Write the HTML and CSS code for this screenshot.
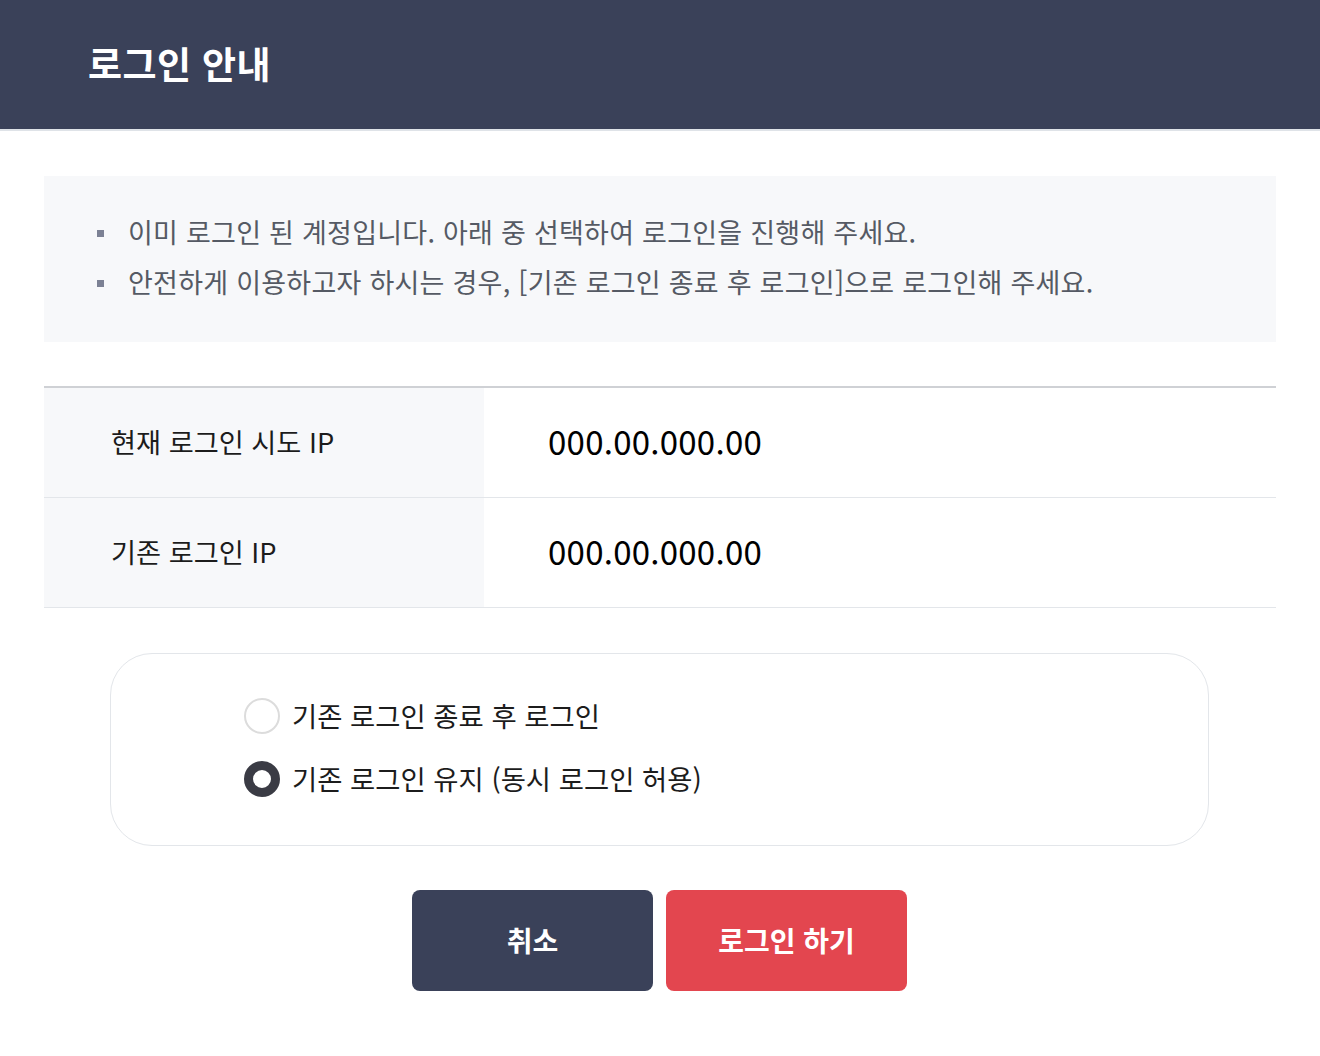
FILE: index.html
```html
<!DOCTYPE html>
<html lang="ko">
<head>
<meta charset="utf-8">
<title>로그인 안내</title>
<link rel="stylesheet" href="styles.css">
</head>
<body>
<header class="header">
  <h1 class="title">로그인 안내</h1>
</header>
<main class="content">
  <ul class="notice">
    <li>이미 로그인 된 계정입니다. 아래 중 선택하여 로그인을 진행해 주세요.</li>
    <li>안전하게 이용하고자 하시는 경우, [기존 로그인 종료 후 로그인]으로 로그인해 주세요.</li>
  </ul>
  <div class="info">
    <div class="row">
      <div class="label">현재 로그인 시도 IP</div>
      <div class="value">000.00.000.00</div>
    </div>
    <div class="row">
      <div class="label">기존 로그인 IP</div>
      <div class="value">000.00.000.00</div>
    </div>
  </div>
  <div class="options">
    <label class="option">
      <span class="radio"></span>
      <span class="option-text">기존 로그인 종료 후 로그인</span>
    </label>
    <label class="option">
      <span class="radio checked"></span>
      <span class="option-text">기존 로그인 유지 (동시 로그인 허용)</span>
    </label>
  </div>
  <div class="actions">
    <button class="btn btn-cancel">취소</button>
    <button class="btn btn-login">로그인 하기</button>
  </div>
</main>
</body>
</html>
```
FILE: styles.css
```css
* { box-sizing: border-box; }
html, body { margin: 0; padding: 0; background: #fff; }
body {
  font-family: "Noto Sans CJK KR", "Noto Sans", sans-serif;
  color: #222;
}
.header {
  height: 131px;
  background: #3a4159;
  border-bottom: 2px solid #dfe3e8;
  display: flex;
  align-items: center;
  padding-left: 88px;
}
.title {
  margin: 0;
  color: #fff;
  font-size: 37px;
  font-weight: 700;
  letter-spacing: 0.4px;
  padding-bottom: 4px;
}
.content {
  padding: 45px 44px 0;
}
.notice {
  list-style: none;
  margin: 0;
  background: #f7f8fa;
  padding: 31px 0 0 0;
  height: 166px;
}
.notice li {
  position: relative;
  padding-left: 84px;
  font-size: 27px;
  line-height: 50px;
  color: #555a64;
  letter-spacing: 0.25px;
}
.notice li::before {
  content: "";
  position: absolute;
  left: 53px;
  top: 23px;
  width: 7px;
  height: 7px;
  background: #7c8194;
}
.info {
  margin-top: 44px;
  border-top: 2px solid #cfd1d5;
}
.row {
  display: flex;
  height: 110px;
  border-bottom: 1px solid #e3e6ea;
}
.label {
  width: 440px;
  background: #f7f8fa;
  padding: 0 0 4px 67px;
  display: flex;
  align-items: center;
  font-size: 27.2px;
  color: #1c1c1c;
  letter-spacing: 0;
}
.value {
  padding: 0 0 4px 64px;
  display: flex;
  align-items: center;
  font-size: 33px;
  color: #000;
  letter-spacing: 0.25px;
}
.options {
  margin: 45px 67px 0 66px;
  height: 193px;
  border: 1px solid #e3e6ea;
  border-radius: 42px;
  display: flex;
  flex-direction: column;
  justify-content: center;
  gap: 27px;
  padding: 0 0 4px 133px;
}
.option {
  display: flex;
  align-items: center;
  gap: 12px;
  height: 36px;
}
.radio {
  width: 36px;
  height: 36px;
  border-radius: 50%;
  border: 2px solid #dcdcdc;
  background: #fff;
  flex-shrink: 0;
}
.radio.checked {
  border: 9px solid #3a3b44;
}
.option-text {
  font-size: 27.4px;
  color: #1c1c1c;
  letter-spacing: 0;
  padding-bottom: 3px;
}
.actions {
  margin-top: 44px;
  display: flex;
  justify-content: center;
  gap: 13px;
  padding-right: 1px;
}
.btn {
  width: 241px;
  height: 101px;
  border: 0;
  border-radius: 8px;
  color: #fff;
  font-family: "Noto Sans CJK KR", "Noto Sans", sans-serif;
  font-size: 28px;
  font-weight: 700;
  letter-spacing: 0;
  padding-bottom: 3px;
}
.btn-cancel { background: #3a4159; }
.btn-login { background: #e3464f; }
```
